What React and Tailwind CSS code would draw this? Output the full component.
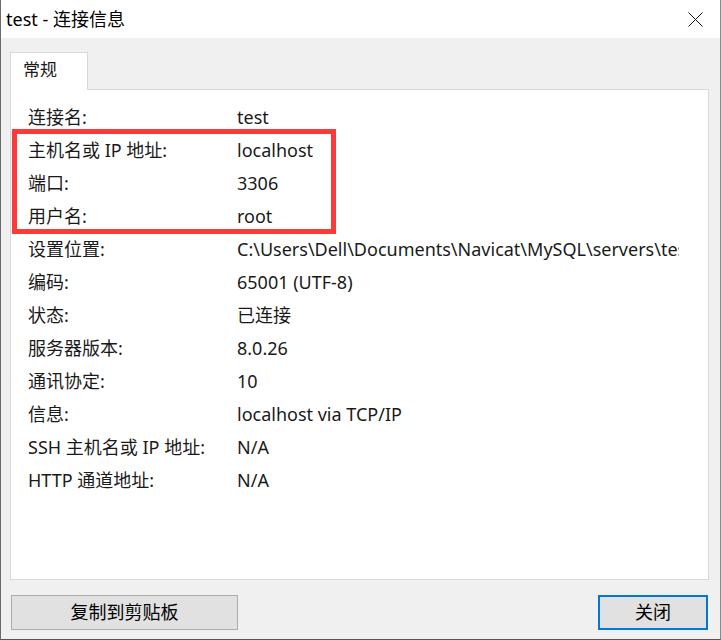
import React from "react";

const rows = [
  ["连接名:", "test"],
  ["主机名或 IP 地址:", "localhost"],
  ["端口:", "3306"],
  ["用户名:", "root"],
  ["设置位置:", "C:\\Users\\Dell\\Documents\\Navicat\\MySQL\\servers\\test"],
  ["编码:", "65001 (UTF-8)"],
  ["状态:", "已连接"],
  ["服务器版本:", "8.0.26"],
  ["通讯协定:", "10"],
  ["信息:", "localhost via TCP/IP"],
  ["SSH 主机名或 IP 地址:", "N/A"],
  ["HTTP 通道地址:", "N/A"],
];

export default function App() {
  return (
    <div
      className="relative w-[721px] h-[640px] bg-[#f0f0f0] border-l border-r border-b border-l-[#6b6b6b] border-r-[#8a8a8a] border-b-[#555555] flex flex-col text-[#1a1a1a] overflow-hidden"
      style={{ fontFamily: '"Noto Sans", "Noto Sans CJK SC", sans-serif' }}
    >
      {/* title bar */}
      <div className="h-[38px] bg-white flex items-center justify-between shrink-0">
        <div className="pl-[5px] text-[18px] leading-none text-black">test - 连接信息</div>
        <div className="w-[46px] h-[38px] flex items-center justify-center mr-[2px]">
          <svg width="15" height="15" viewBox="0 0 15 15">
            <path d="M0.5 0.5 L14.5 14.5 M14.5 0.5 L0.5 14.5" stroke="#111" strokeWidth="1" fill="none" />
          </svg>
        </div>
      </div>

      {/* tabs */}
      <div className="pl-[9px] pr-[11px] pt-[13px] flex flex-col">
        <div className="flex">
          <div className="w-[78px] h-[38px] bg-white border border-[#d9d9d9] border-b-0 flex items-start pt-[4px] pl-[12px] text-[17px] relative top-[1px] z-10">
            常规
          </div>
        </div>
        <div className="h-[491px] bg-white border border-[#d9d9d9] pl-[17px] pt-[11px] pr-[29px]">
          {rows.map(([k, v], i) => (
            <div key={i} className="flex h-[33px] items-center text-[18px] whitespace-nowrap">
              <div className="w-[209px] shrink-0">{k}</div>
              <div className="overflow-hidden flex-1">{v}</div>
            </div>
          ))}
        </div>
      </div>

      {/* buttons */}
      <div className="flex justify-between pl-[10px] pr-[12px] pt-[15px]">
        <button className="w-[227px] h-[35px] bg-[#e1e1e1] border border-[#adadad] text-[18px] text-black flex items-center justify-center">
          复制到剪贴板
        </button>
        <button className="w-[110px] h-[35px] bg-[#e1e1e1] border-2 border-[#0078d7] text-[18px] text-black flex items-center justify-center">
          关闭
        </button>
      </div>

      {/* annotation */}
      <div className="absolute left-[11px] top-[129px] w-[324px] h-[105px] border-[5px] border-[#fc3a3a] pointer-events-none" />
    </div>
  );
}
